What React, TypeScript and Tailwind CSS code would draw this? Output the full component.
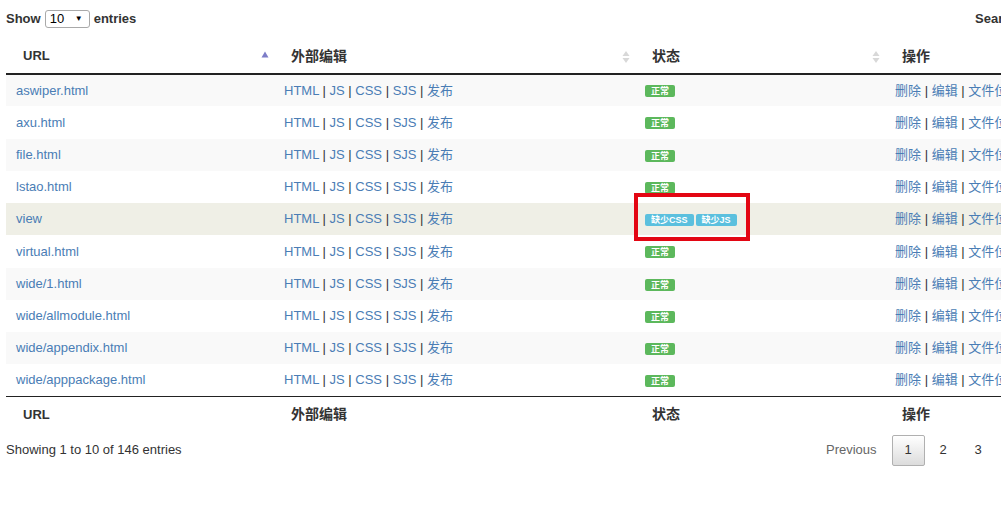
import React from "react";

const rows = [
  "aswiper.html",
  "axu.html",
  "file.html",
  "lstao.html",
  "view",
  "virtual.html",
  "wide/1.html",
  "wide/allmodule.html",
  "wide/appendix.html",
  "wide/apppackage.html",
];

const SortBoth = () => (
  <svg width="8" height="14" viewBox="0 0 8 14" className="absolute right-[5px] top-[11px]">
    <path d="M4 1 L7.5 6 L0.5 6 Z" fill="#d8d8d8" />
    <path d="M4 13 L7.5 8 L0.5 8 Z" fill="#d8d8d8" />
  </svg>
);

const SortAsc = () => (
  <svg width="8" height="8" viewBox="0 0 8 8" className="absolute right-[5px] top-[12px]">
    <path d="M4 0.5 L7.5 6.5 L0.5 6.5 Z" fill="#7d7dc8" />
  </svg>
);

const Sep = () => <span className="text-[#333]"> | </span>;

const Label = ({ text, color }: { text: string; color: string }) => (
  <span
    className={`inline-block ${color} text-white font-bold text-[9px] leading-[12px] px-[6px] rounded-[2px] align-middle`}
  >
    {text}
  </span>
);

const App = () => {
  return (
    <div
      className="w-[1001px] h-[531px] overflow-hidden bg-white text-[#333] text-[13px]"
      style={{ fontFamily: '"Liberation Sans", Arial, "Noto Sans CJK SC", sans-serif' }}
    >
      <div className="relative w-[1200px] pl-[6px] pt-[9px]">
        {/* top controls */}
        <div className="flex items-center h-[20px]">
          <div className="flex items-center w-[969px] font-bold">
            <span>Show</span>
            <div className="mx-[4px] flex items-center justify-between w-[45px] h-[18px] border border-[#a9a9a9] rounded-[3px] px-[4px] font-normal text-[13px] text-black">
              <span>10</span>
              <span className="text-[8px] pr-[2px]">▼</span>
            </div>
            <span>entries</span>
          </div>
          <div className="flex items-center font-bold">
            <span>Search:</span>
            <div className="ml-[4px] w-[160px] h-[20px] border border-[#a9a9a9]" />
          </div>
        </div>

        {/* table */}
        <table className="mt-[10px] w-[1130px] table-fixed border-collapse">
          <colgroup>
            <col className="w-[268px]" />
            <col className="w-[361px]" />
            <col className="w-[250px]" />
            <col />
          </colgroup>
          <thead>
            <tr className="h-[35px] border-b-2 border-[#222]">
              <th className="relative text-left font-bold pl-[17px] text-[13px]">
                URL
                <SortAsc />
              </th>
              <th className="relative text-left font-bold pl-[17px] text-[14px]">
                外部编辑
                <SortBoth />
              </th>
              <th className="relative text-left font-bold pl-[17px] text-[14px]">
                状态
                <SortBoth />
              </th>
              <th className="relative text-left font-bold pl-[17px] text-[14px]">
                操作
                <SortBoth />
              </th>
            </tr>
          </thead>
          <tbody>
            {rows.map((url, i) => {
              const isView = url === "view";
              const bg = isView ? "bg-[#efefe6]" : i % 2 === 0 ? "bg-[#f9f9f9]" : "bg-white";
              const h = i === 1 || i === 5 ? "h-[33px]" : "h-[32px]";
              return (
                <tr key={url} className={`${h} ${bg}`}>
                  <td className="pl-[10px] text-[#4a7db5]">{url}</td>
                  <td className="pl-[10px] text-[#4a7db5] whitespace-nowrap">
                    HTML<Sep />JS<Sep />CSS<Sep />SJS<Sep />发布
                  </td>
                  <td className="pl-[10px]">
                    {isView ? (
                      <span className="inline-flex gap-[2px]">
                        <Label text="缺少CSS" color="bg-[#5bc0de]" />
                        <Label text="缺少JS" color="bg-[#5bc0de]" />
                      </span>
                    ) : (
                      <Label text="正常" color="bg-[#5cb85c]" />
                    )}
                  </td>
                  <td className="pl-[10px] text-[#4a7db5] whitespace-nowrap">
                    删除<Sep />编辑<Sep />文件位置
                  </td>
                </tr>
              );
            })}
          </tbody>
          <tfoot>
            <tr className="h-[37px] border-t border-[#222]">
              <th className="text-left font-bold pl-[17px] text-[13px]">URL</th>
              <th className="text-left font-bold pl-[17px] text-[14px]">外部编辑</th>
              <th className="text-left font-bold pl-[17px] text-[14px]">状态</th>
              <th className="text-left font-bold pl-[17px] text-[14px]">操作</th>
            </tr>
          </tfoot>
        </table>

        {/* info + pagination */}
        <div className="flex items-center h-[32px] mt-[1px]">
          <div className="w-[805px]">Showing 1 to 10 of 146 entries</div>
          <div className="flex items-center">
            <span className="ml-[2px] px-[13px] py-[6px] text-[#666]">Previous</span>
            <span className="ml-[2px] w-[33px] h-[31px] flex items-center justify-center border border-[#b0b0b0] rounded-[2px] bg-gradient-to-b from-white to-[#dcdcdc] text-[#333]">
              1
            </span>
            <span className="ml-[2px] w-[33px] h-[31px] flex items-center justify-center text-[#333]">2</span>
            <span className="ml-[2px] w-[33px] h-[31px] flex items-center justify-center text-[#333]">3</span>
            <span className="ml-[2px] px-[13px] text-[#666]">Next</span>
          </div>
        </div>

        {/* red annotation box */}
        <div className="absolute left-[634px] top-[193px] w-[116px] h-[48px] border-[4px] border-[#e30613]" />
      </div>
    </div>
  );
};

export default App;
